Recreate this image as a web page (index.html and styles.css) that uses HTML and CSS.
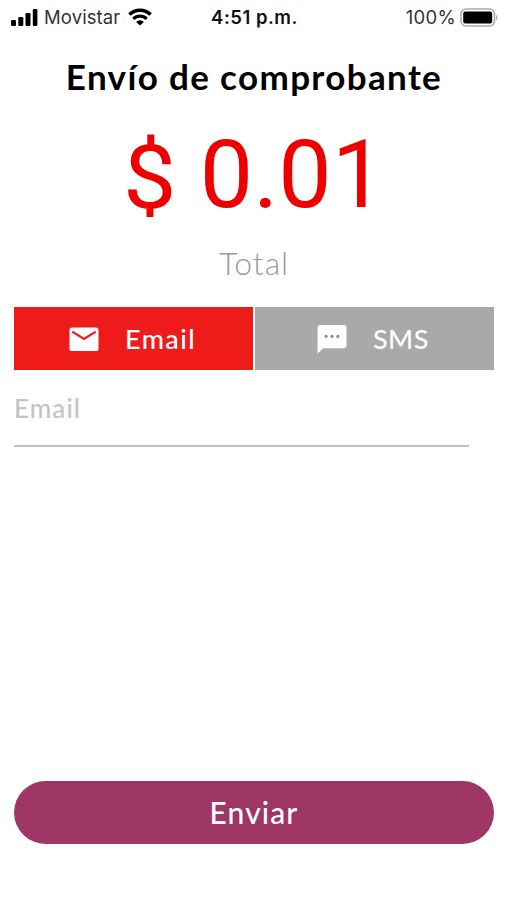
FILE: index.html
```
<!DOCTYPE html>
<html lang="es">
<head>
    <meta charset="UTF-8">
    <meta name="viewport" content="width=device-width, initial-scale=1.0">
    <title>Envío de comprobante</title>
    <link rel="stylesheet" href="styles.css">
</head>
<body>
    <header class="status-bar">
        <div class="carrier">
            <svg class="signal" viewBox="0 0 27 17" width="27" height="17">
                <rect x="0" y="11" width="5" height="6" rx="1.2"/>
                <rect x="7.3" y="8" width="5" height="9" rx="1.2"/>
                <rect x="14.5" y="4" width="5" height="13" rx="1.2"/>
                <rect x="21.8" y="0" width="4.6" height="17" rx="1.2"/>
            </svg>
            <span class="carrier-name">Movistar</span>
            <svg class="wifi" viewBox="0 0 24 18" width="24" height="18">
                <path d="M1.4 6.6a15 15 0 0 1 21.2 0" fill="none" stroke="#000" stroke-width="3.5"/>
                <path d="M5.3 10.9a9.5 9.5 0 0 1 13.4 0" fill="none" stroke="#000" stroke-width="3.1"/>
                <path d="M12 17.6l-3.9-3.7a5.5 5.5 0 0 1 7.8 0z"/>
            </svg>
        </div>
        <div class="time">4:51 p.m.</div>
        <div class="battery">
            <span class="battery-level">100%</span>
            <svg viewBox="0 0 38 19" width="38" height="19">
                <rect x="1" y="1" width="33.5" height="17" rx="5" fill="#fff" stroke="#aaa" stroke-width="1.6"/>
                <rect x="3.2" y="3.4" width="29" height="12.2" rx="2"/>
                <path d="M36 7c1.8.6 1.8 4.4 0 5z" fill="#aaa"/>
            </svg>
        </div>
    </header>

    <main>
        <h1>Envío de comprobante</h1>
        <div class="amount"><span class="currency">$</span> 0.01</div>
        <div class="total">Total</div>

        <div class="tabs">
            <button class="tab active" type="button">
                <svg viewBox="0 0 30 30" width="30" height="30">
                    <rect x="0.5" y="3.5" width="29" height="23.5" rx="2.6" fill="#fff"/>
                    <path d="M3.3 7.6L15 15l11.7-7.4" fill="none" stroke="#ef1b1b" stroke-width="2.3"/>
                </svg>
                <span>Email</span>
            </button>
            <button class="tab" type="button">
                <svg viewBox="0 0 30 30" width="30" height="30">
                    <path d="M3.3 1h23.4a2.8 2.8 0 0 1 2.8 2.8v17.7a2.8 2.8 0 0 1-2.8 2.8H6.2L.6 29.5V3.8A2.8 2.8 0 0 1 3.3 1z" fill="#fff"/>
                    <g fill="#8f8f8f">
                        <circle cx="9.2" cy="12.4" r="1.6"/>
                        <circle cx="15" cy="12.4" r="1.6"/>
                        <circle cx="20.8" cy="12.4" r="1.6"/>
                    </g>
                </svg>
                <span>SMS</span>
            </button>
        </div>

        <input type="email" id="email" placeholder="Email">
    </main>

    <button class="send" type="button">Enviar</button>
</body>
</html>
```
FILE: styles.css
```
* {
    box-sizing: border-box;
}
body {
    font-family: Lato, "Open Sans", sans-serif;
    margin: 0;
    padding: 0 13px 56px 14px;
    background: #fff;
    color: #000;
    height: 900px;
    display: flex;
    flex-direction: column;
    overflow: hidden;
}
.status-bar {
    display: grid;
    grid-template-columns: 1fr auto 1fr;
    align-items: center;
    height: 34px;
    margin: 0 -4px 0 -3px;
    font-family: Inter, Roboto, sans-serif;
    font-size: 18.5px;
}
.carrier,
.battery {
    display: flex;
    align-items: center;
    color: #333;
}
.carrier-name {
    margin: 0 8px 0 6px;
    letter-spacing: 0.1px;
}
.time {
    font-weight: 600;
    color: #111;
    letter-spacing: 0.5px;
}
.battery {
    justify-content: flex-end;
    gap: 4px;
}
.battery-level {
    letter-spacing: 0.3px;
}
h1 {
    font-size: 35px;
    line-height: 42px;
    font-weight: 700;
    letter-spacing: 1.35px;
    text-align: center;
    margin: 21px 0 0;
    white-space: nowrap;
}
.amount {
    font-family: Roboto, sans-serif;
    font-size: 95px;
    line-height: 112px;
    color: #ee0000;
    text-align: center;
    margin-top: 22px;
}
.currency {
    display: inline-block;
    transform: scaleY(0.93);
    transform-origin: 0 87%;
}
.total {
    font-size: 32px;
    line-height: 40px;
    font-weight: 300;
    letter-spacing: 0.9px;
    color: #999;
    text-align: center;
    margin-top: 12px;
}
.tabs {
    display: grid;
    grid-template-columns: 1fr 1fr;
    gap: 2px;
    margin-top: 24px;
}
.tab {
    display: flex;
    align-items: center;
    height: 63px;
    padding: 0 0 0 55px;
    gap: 26px;
    border: none;
    background: #a9a9a9;
    color: #fff;
    font-family: inherit;
    font-size: 27px;
    font-weight: 500;
    letter-spacing: 0.4px;
}
.tab + .tab {
    padding-left: 62px;
}
.tab.active {
    background: #ef1b1b;
    letter-spacing: 1.4px;
}
input[type="email"] {
    display: block;
    width: 455px;
    height: 77px;
    padding: 1px 0 0;
    border: none;
    border-bottom: 2px solid #c2c2c2;
    background: none;
    font-family: inherit;
    font-size: 26px;
    font-weight: 500;
    letter-spacing: 1.1px;
    outline: none;
}
input[type="email"]::placeholder {
    color: #c4c4c4;
    opacity: 1;
}
.send {
    height: 63px;
    margin-top: auto;
    padding-bottom: 3px;
    border: none;
    border-radius: 32px;
    background: #9e3666;
    color: #fff;
    font-family: inherit;
    font-size: 30px;
    font-weight: 500;
    letter-spacing: 1.1px;
}
```
